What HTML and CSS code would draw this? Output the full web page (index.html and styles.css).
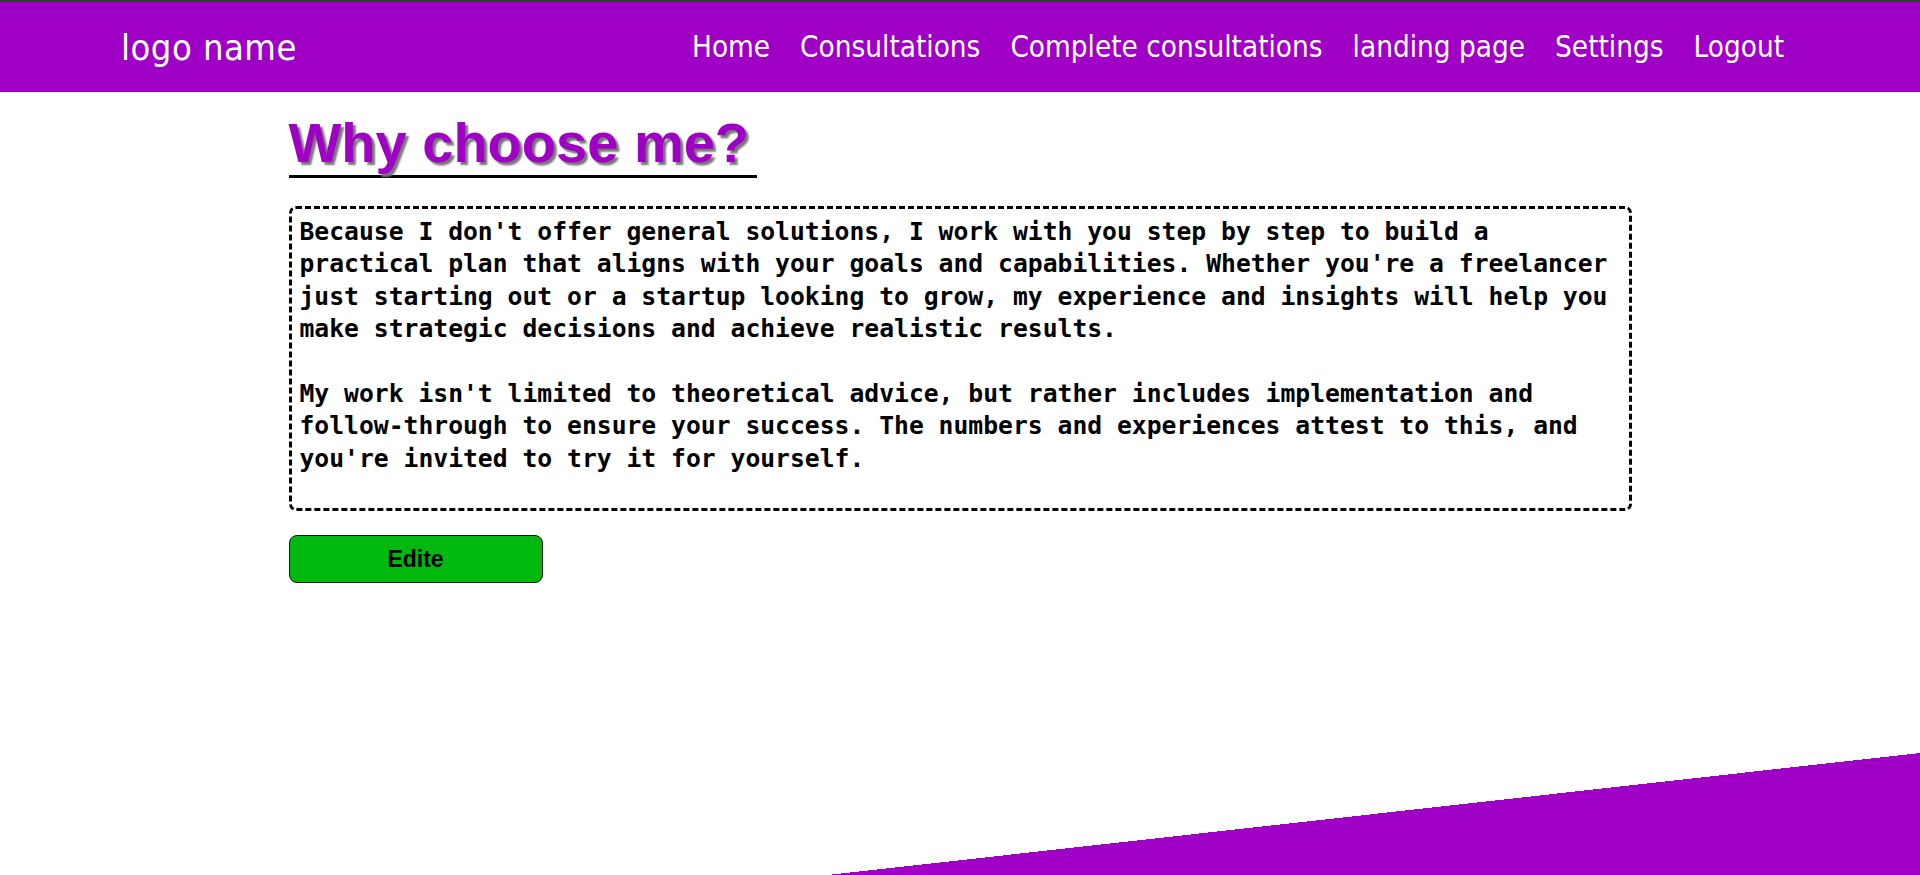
FILE: index.html
```html
<!DOCTYPE html>
<html lang="en">
<head>
    <meta charset="UTF-8">
    <meta name="viewport" content="width=device-width, initial-scale=1.0">
    <title>Why choose me?</title>
    <link rel="stylesheet" href="styles.css">
</head>
<body>
    <header class="navbar">
        <a class="logo" href="#">logo name</a>
        <nav class="nav-links">
            <a href="#">Home</a>
            <a href="#">Consultations</a>
            <a href="#">Complete consultations</a>
            <a href="#">landing page</a>
            <a href="#">Settings</a>
            <a href="#">Logout</a>
        </nav>
    </header>

    <main class="content">
        <h1 class="title">Why choose me?</h1>

        <div class="about-box">
            <p>Because I don't offer general solutions, I work with you step by step to build a practical plan that aligns with your goals and capabilities. Whether you're a freelancer just starting out or a startup looking to grow, my experience and insights will help you make strategic decisions and achieve realistic results.</p>
            <p>My work isn't limited to theoretical advice, but rather includes implementation and follow-through to ensure your success. The numbers and experiences attest to this, and you're invited to try it for yourself.</p>
        </div>

        <button class="edit-btn">Edite</button>
    </main>
</body>
</html>
```

FILE: styles.css
```css
html {
    min-height: 100%;
    background: #fff linear-gradient(to top left, #a000c6 50%, transparent 50%) no-repeat right bottom / 1092px 122px fixed;
}
body {
    margin: 0;
    font-family: "Liberation Sans", Arial, sans-serif;
}
.navbar {
    display: flex;
    align-items: center;
    justify-content: space-between;
    height: 90px;
    padding: 0 136px 0 121px;
    background-color: #a000c6;
    border-top: 2px solid #3a3a3a;
}
.navbar a {
    color: #fff;
    text-decoration: none;
    font-family: "DejaVu Sans Condensed", "DejaVu Sans", sans-serif;
    font-stretch: condensed;
}
.logo {
    font-size: 36px;
    letter-spacing: 0.5px;
}
.nav-links {
    display: flex;
    gap: 30px;
}
.nav-links a {
    font-size: 29.4px;
}
.content {
    width: 1343px;
    margin: 0 auto;
}
.title {
    width: fit-content;
    margin: 18px 0 28px;
    padding-right: 8px;
    font-size: 56px;
    line-height: normal;
    color: #a000c6;
    text-shadow: 3px 3px 2px #777;
    border-bottom: 3px solid #000;
}
.about-box {
    box-sizing: border-box;
    height: 305px;
    padding: 7px 13px 6px 8px;
    border: 3px dashed #000;
    border-radius: 7px;
    font-family: "DejaVu Sans Mono", "Liberation Mono", monospace;
    font-weight: bold;
    font-size: 24.7px;
    line-height: 32.4px;
    color: #000;
}
.about-box p {
    margin: 0 0 32.4px;
}
.edit-btn {
    display: block;
    width: 254px;
    height: 48px;
    margin-top: 24px;
    background-color: #00b80e;
    border: 1px solid #111;
    border-radius: 8px;
    font-family: "Liberation Sans", Arial, sans-serif;
    font-weight: bold;
    font-size: 23px;
    color: #000;
    cursor: pointer;
}
```
